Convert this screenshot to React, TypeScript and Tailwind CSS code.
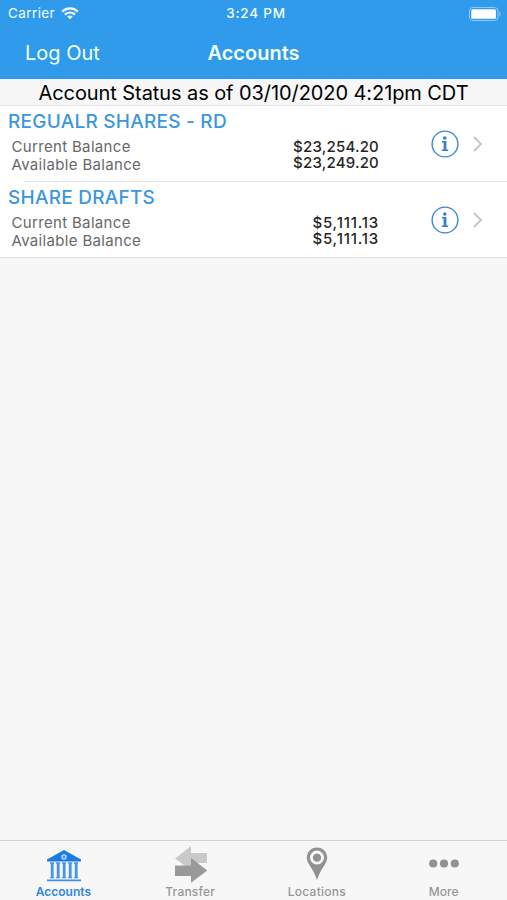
import React from "react";

type Account = { name: string; current: string; available: string; full: boolean; amountClass: string };

const accounts: Account[] = [
  { name: "REGUALR SHARES - RD", current: "$23,254.20", available: "$23,249.20", full: false, amountClass: "tracking-[0.2px]" },
  { name: "SHARE DRAFTS", current: "$5,111.13", available: "$5,111.13", full: true, amountClass: "tracking-[0.8px]" },
];

function WifiIcon() {
  return (
    <svg width="18" height="13" viewBox="0 0 18 13" fill="none" stroke="#f4ffff" strokeWidth="2.2">
      <path d="M1.2 4.6C5.6.4 12.4.4 16.8 4.6" />
      <path d="M4 7.6c2.9-2.7 7.1-2.7 10 0" />
      <path d="M9 12.2 6.3 9.5c1.6-1.4 3.8-1.4 5.4 0z" fill="#f4ffff" stroke="none" />
    </svg>
  );
}

function BatteryIcon() {
  return (
    <svg width="32" height="14" viewBox="0 0 32 14">
      <rect x="0.5" y="0.5" width="28.5" height="13" rx="3.5" fill="none" stroke="#8dc9f7" />
      <rect x="2.3" y="2.3" width="24.6" height="9.4" rx="1.5" fill="#fff" />
      <path d="M30.3 4.5c1.5.6 1.5 4.4 0 5z" fill="#8dc9f7" />
    </svg>
  );
}

function InfoIcon() {
  return (
    <svg width="28" height="28" viewBox="0 0 28 28">
      <circle cx="14" cy="14" r="12.9" fill="none" stroke="#3b88d8" strokeWidth="1.4" />
      <circle cx="13.8" cy="8" r="1.8" fill="#3482cf" />
      <path d="M11 11h4.400v8.600h1.800v1.300H10.800v-1.300h1.800v-7.200H11z" fill="#3482cf" />
    </svg>
  );
}

function Chevron() {
  return (
    <svg width="10" height="16" viewBox="0 0 10 16" fill="none" stroke="#c6c6c8" strokeWidth="2">
      <path d="m1 1 7 7-7 7" />
    </svg>
  );
}

function BankIcon() {
  return (
    <svg width="36" height="32" viewBox="0 0 36 32">
      <path d="M18 0 35 9.6v2H1v-2z" fill="#187ce6" />
      <circle cx="18" cy="6.9" r="2.1" fill="#4d9bec" stroke="#d5eaff" strokeWidth="1.1" />
      <path d="M4 13h4.2M10 13h4.2M16 13h4.2M22 13h4.2M28 13h4.2M4 27.6h4.2M10 27.6h4.2M16 27.6h4.2M22 27.6h4.2M28 27.6h4.2" stroke="#4b98e8" strokeWidth="1.3" />
      <path d="M6.2 13v15M12.2 13v15M18.2 13v15M24.2 13v15M30.2 13v15" stroke="#4595e8" strokeWidth="2.8" />
      <path d="M1 30.4h34" stroke="#3f91e7" strokeWidth="1.8" />
    </svg>
  );
}

function TransferIcon() {
  return (
    <svg width="34" height="37" viewBox="0 0 34 37">
      <path d="M1 12.5 17 0v7h16v10H17v7z" fill="#c9c9c9" />
      <path d="M1 19.5h16V12l16.3 12.5L17 36.800V30H1z" fill="#999" />
    </svg>
  );
}

function PinIcon() {
  return (
    <svg width="22" height="34" viewBox="0 0 22 34">
      <path d="M11 .5C5 .5.8 5 .8 10.8.8 17 6.5 20 11 33c4.500-13 10.200-16 10.200-22.200C21.200 5 17 .5 11 .5z" fill="#929292" />
      <circle cx="11" cy="10.600" r="5.600" fill="#929292" stroke="#fafafa" strokeWidth="2.800" />
    </svg>
  );
}

function MoreIcon() {
  return (
    <svg width="30" height="9" viewBox="0 0 30 9" fill="#929292">
      <circle cx="4.200" cy="4.500" r="4.100" />
      <circle cx="15" cy="4.500" r="4.100" />
      <circle cx="25.800" cy="4.500" r="4.100" />
    </svg>
  );
}

function AccountRow({ account }: { account: Account }) {
  return (
    <li className="flex h-[76px] flex-col bg-white">
      <div className="flex h-[75px]">
        <div className="w-[240px] shrink-0 pl-2 pt-1">
          <h2 className="h-7 whitespace-nowrap text-[19px] font-medium leading-6 tracking-[0.25px] text-[#3b97df]">{account.name}</h2>
          <div className="pl-[3.5px] text-[15px] leading-[18px] tracking-[0.33px] text-[#68686a]">
            <p>Current Balance</p>
            <p>Available Balance</p>
          </div>
        </div>
        <div className={`w-[139px] shrink-0 pt-[33px] text-right text-[15px] font-medium leading-4 text-[#262626] ${account.amountClass}`}>
          <p>{account.current}</p>
          <p>{account.available}</p>
        </div>
        <button className="ml-[52px] mt-6 h-7 w-7 shrink-0" aria-label="Account details"><InfoIcon /></button>
        <span className="ml-[14px] mt-[30px]"><Chevron /></span>
      </div>
      <div className={account.full ? "h-px bg-[#dddddf]" : "ml-6 h-px bg-[#e2e2e4]"} />
    </li>
  );
}

const tabs = [
  { label: "Accounts", Icon: BankIcon, color: "text-[#2e86e3]", iconPad: "pt-[9px] pl-px", weight: "font-semibold" },
  { label: "Transfer", Icon: TransferIcon, color: "text-[#969696]", iconPad: "pt-[5px] pl-px", weight: "font-medium tracking-[0.2px]" },
  { label: "Locations", Icon: PinIcon, color: "text-[#969696]", iconPad: "pt-[6px] pl-px", weight: "font-medium tracking-[0.25px]" },
  { label: "More", Icon: MoreIcon, color: "text-[#969696]", iconPad: "pt-[18px]", weight: "font-medium" },
];

export default function App() {
  return (
    <div className="flex h-[900px] w-[507px] flex-col overflow-hidden bg-[#f7f7f7] font-['Inter',sans-serif]">
      <header className="h-[79px] shrink-0 bg-[#309beb] text-[#f1ffff]">
        <div className="grid h-[27px] grid-cols-3 items-center pl-2 pr-1.5 text-[13.5px] leading-[27px]">
          <div className="flex items-center gap-1.5"><span className="tracking-[0.4px]">Carrier</span><WifiIcon /></div>
          <div className="pl-[3px] text-center font-medium tracking-[0.8px]">3:24 PM</div>
          <div className="flex justify-end"><BatteryIcon /></div>
        </div>
        <div className="grid h-[51px] grid-cols-3 items-center text-[20px]">
          <button className="pl-[25px] text-left">Log Out</button>
          <h1 className="text-center font-semibold">Accounts</h1>
        </div>
      </header>
      <div className="h-[27px] shrink-0 whitespace-nowrap border-b border-[#e6e6e8] text-center text-[20px] leading-7 tracking-[-0.08px] text-black">Account Status as of 03/10/2020 4:21pm CDT</div>
      <ul>
        {accounts.map((a) => <AccountRow key={a.name} account={a} />)}
      </ul>
      <nav className="mt-auto grid h-[60px] grid-cols-4 border-t border-[#d2d2d4]">
        {tabs.map(({ label, Icon, color, iconPad, weight }) => (
          <button key={label} className={`flex flex-col items-center ${color}`}>
            <span className={`flex h-[43px] shrink-0 items-start ${iconPad}`}><Icon /></span>
            <span className={`text-[12px] leading-4 ${weight}`}>{label}</span>
          </button>
        ))}
      </nav>
    </div>
  );
}
